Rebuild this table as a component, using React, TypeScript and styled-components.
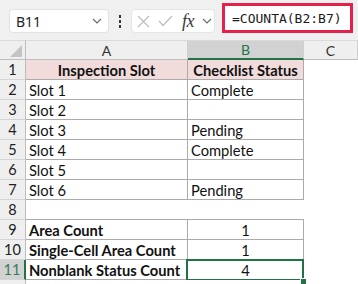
import React from 'react';
import styled, { createGlobalStyle } from 'styled-components';

const GlobalStyle = createGlobalStyle`
  body {
    margin: 0;
    background: #ffffff;
    font-family: Lato, "Liberation Sans", sans-serif;
  }
`;

const GREEN = '#217346';
const COLS = '26px 162px 116px 1fr';

type Row = {
  n: number;
  a?: string;
  b?: string;
  kind: 'head' | 'data' | 'blank' | 'summary';
  selected?: boolean;
  hideNumber?: boolean;
};

const rows: Row[] = [
  { n: 1, a: 'Inspection Slot', b: 'Checklist Status', kind: 'head' },
  { n: 2, a: 'Slot 1', b: 'Complete', kind: 'data' },
  { n: 3, a: 'Slot 2', b: '', kind: 'data' },
  { n: 4, a: 'Slot 3', b: 'Pending', kind: 'data' },
  { n: 5, a: 'Slot 4', b: 'Complete', kind: 'data' },
  { n: 6, a: 'Slot 5', b: '', kind: 'data' },
  { n: 7, a: 'Slot 6', b: 'Pending', kind: 'data' },
  { n: 8, kind: 'blank' },
  { n: 9, a: 'Area Count', b: '1', kind: 'summary' },
  { n: 10, a: 'Single-Cell Area Count', b: '1', kind: 'summary' },
  { n: 11, a: 'Nonblank Status Count', b: '4', kind: 'summary', selected: true },
  // only a sliver of row 12 shows at the bottom edge
  { n: 12, kind: 'blank', hideNumber: true },
];

const Sheet = styled.div`
  width: 358px;
  height: 284px;
  overflow: hidden;
  background: #ffffff;
`;

const Toolbar = styled.div`
  height: 40px;
  box-sizing: border-box;
  background: #f0f0f0;
  display: flex;
  align-items: flex-end;
  padding: 0 0 7px 9px;
`;

const NameBox = styled.div`
  width: 100px;
  height: 24px;
  box-sizing: border-box;
  background: #ffffff;
  border: 1px solid #e2e2e2;
  border-radius: 4px;
  display: flex;
  align-items: center;
  justify-content: space-between;
  padding: 0 6px 0 6px;
  font-family: "Noto Sans", "Liberation Sans", sans-serif;
  font-size: 14px;
  color: #222;
`;

const Dots = styled.div`
  width: 22px;
  height: 24px;
  display: flex;
  flex-direction: column;
  align-items: center;
  justify-content: center;
  gap: 2px;
  span {
    width: 2px;
    height: 3px;
    background: #333;
  }
`;

const ActionBox = styled.div`
  width: 84px;
  height: 24px;
  box-sizing: border-box;
  background: #ffffff;
  border: 1px solid #e6e6e6;
  border-radius: 4px;
  display: flex;
  align-items: center;
  padding-left: 5px;
  gap: 8px;
`;

const Fx = styled.span`
  font-family: "Liberation Serif", serif;
  font-style: italic;
  font-size: 18px;
  color: #3a3a3a;
  margin-left: 1px;
  letter-spacing: -0.5px;
`;

const FormulaBox = styled.div`
  margin-left: 7px;
  width: 131px;
  height: 30px;
  box-sizing: border-box;
  background: #ffffff;
  border: 3px solid #e3214a;
  display: flex;
  align-items: center;
  padding-left: 7px;
  font-family: "DejaVu Sans Mono", "Liberation Mono", monospace;
  font-size: 13px;
  color: #1a1a1a;
  white-space: nowrap;
`;

const Grid = styled.div`
  display: flex;
  flex-direction: column;
`;

const GridRow = styled.div`
  display: grid;
  grid-template-columns: ${COLS};
  height: 20px;
`;

const HeaderCell = styled.div<{ $selected?: boolean }>`
  box-sizing: border-box;
  display: flex;
  align-items: center;
  justify-content: center;
  background: ${(p) => (p.$selected ? '#d2d2d2' : '#efefef')};
  color: ${(p) => (p.$selected ? GREEN : '#333')};
  font-size: 14px;
  border-right: 1px solid #d0d0d0;
  border-bottom: ${(p) => (p.$selected ? `2px solid ${GREEN}` : '1px solid #bdbdbd')};
  border-top: 1px solid #dadada;
`;

const Corner = styled.div`
  box-sizing: border-box;
  background: #efefef;
  border-right: 1px solid #bdbdbd;
  border-bottom: 1px solid #bdbdbd;
  border-top: 1px solid #dadada;
  display: flex;
  align-items: flex-end;
  justify-content: flex-end;
  padding: 0 3px 2px 0;
`;

const RowHead = styled.div<{ $selected?: boolean }>`
  box-sizing: border-box;
  display: flex;
  align-items: center;
  justify-content: center;
  background: ${(p) => (p.$selected ? '#d2d2d2' : '#efefef')};
  color: ${(p) => (p.$selected ? '#3d7a57' : '#222')};
  font-size: 14.5px;
  border-bottom: 1px solid #d4d4d4;
  border-right: ${(p) => (p.$selected ? `2px solid ${GREEN}` : '1px solid #bdbdbd')};
`;

const Cell = styled.div<{
  $boxed?: boolean;
  $underline?: boolean;
  $fill?: string;
  $bold?: boolean;
  $center?: boolean;
}>`
  position: relative;
  box-sizing: border-box;
  display: flex;
  align-items: center;
  justify-content: ${(p) => (p.$center ? 'center' : 'flex-start')};
  padding: 0 3px;
  background: ${(p) => p.$fill || '#ffffff'};
  font-size: 14.7px;
  font-weight: ${(p) => (p.$bold ? 700 : 400)};
  color: #111;
  white-space: nowrap;
  border-right: ${(p) => (p.$boxed ? '1px solid #ababab' : '0')};
  border-bottom: ${(p) => (p.$boxed || p.$underline ? '1px solid #ababab' : '0')};
`;

const Selected = styled(Cell)`
  &::after {
    content: '';
    position: absolute;
    top: -1px;
    left: -2px;
    right: -1px;
    bottom: -2px;
    border: 2px solid ${GREEN};
  }
  &::before {
    content: '';
    position: absolute;
    right: -4px;
    bottom: -6px;
    width: 5px;
    height: 5px;
    background: ${GREEN};
    border: 1px solid #ffffff;
    z-index: 2;
  }
`;

const Chevron = () => (
  <svg width="10" height="6" viewBox="0 0 10 6">
    <path d="M1 1 L5 5 L9 1" fill="none" stroke="#666" strokeWidth="1.1" />
  </svg>
);

const App = () => {
  return (
    <Sheet>
      <GlobalStyle />
      <Toolbar>
        <NameBox>
          <span>B11</span>
          <Chevron />
        </NameBox>
        <Dots>
          <span />
          <span />
          <span />
        </Dots>
        <ActionBox>
          <svg width="13" height="13" viewBox="0 0 13 13">
            <path d="M1 1 L12 12 M12 1 L1 12" stroke="#bdbdbd" strokeWidth="1.2" />
          </svg>
          <svg width="15" height="12" viewBox="0 0 15 12">
            <path d="M1 6 L5 10.5 L14 1" fill="none" stroke="#bdbdbd" strokeWidth="1.2" />
          </svg>
          <Fx>fx</Fx>
          <Chevron />
        </ActionBox>
        <FormulaBox>=COUNTA(B2:B7)</FormulaBox>
      </Toolbar>
      <Grid>
        <GridRow>
          <Corner>
            <svg width="12" height="12" viewBox="0 0 12 12">
              <polygon points="12,0 12,12 0,12" fill="#c4c4c4" />
            </svg>
          </Corner>
          <HeaderCell>A</HeaderCell>
          <HeaderCell $selected>B</HeaderCell>
          <HeaderCell>C</HeaderCell>
        </GridRow>
        {rows.map((r) => {
          const boxed = r.kind !== 'blank';
          const underline = r.n === 8;
          const BCell = r.selected ? Selected : Cell;
          return (
            <GridRow key={r.n}>
              <RowHead $selected={r.selected}>{r.hideNumber ? null : r.n}</RowHead>
              <Cell
                $boxed={boxed}
                $underline={underline}
                $fill={r.kind === 'head' ? '#f2dcdb' : undefined}
                $bold={r.kind === 'head' || r.kind === 'summary'}
                $center={r.kind === 'head'}
              >
                {r.a}
              </Cell>
              <BCell
                $boxed={boxed}
                $underline={underline}
                $fill={r.kind === 'head' ? '#f2dcdb' : undefined}
                $bold={r.kind === 'head'}
                $center={r.kind === 'head' || r.kind === 'summary'}
              >
                {r.b}
              </BCell>
              <Cell />
            </GridRow>
          );
        })}
      </Grid>
    </Sheet>
  );
};

export default App;
